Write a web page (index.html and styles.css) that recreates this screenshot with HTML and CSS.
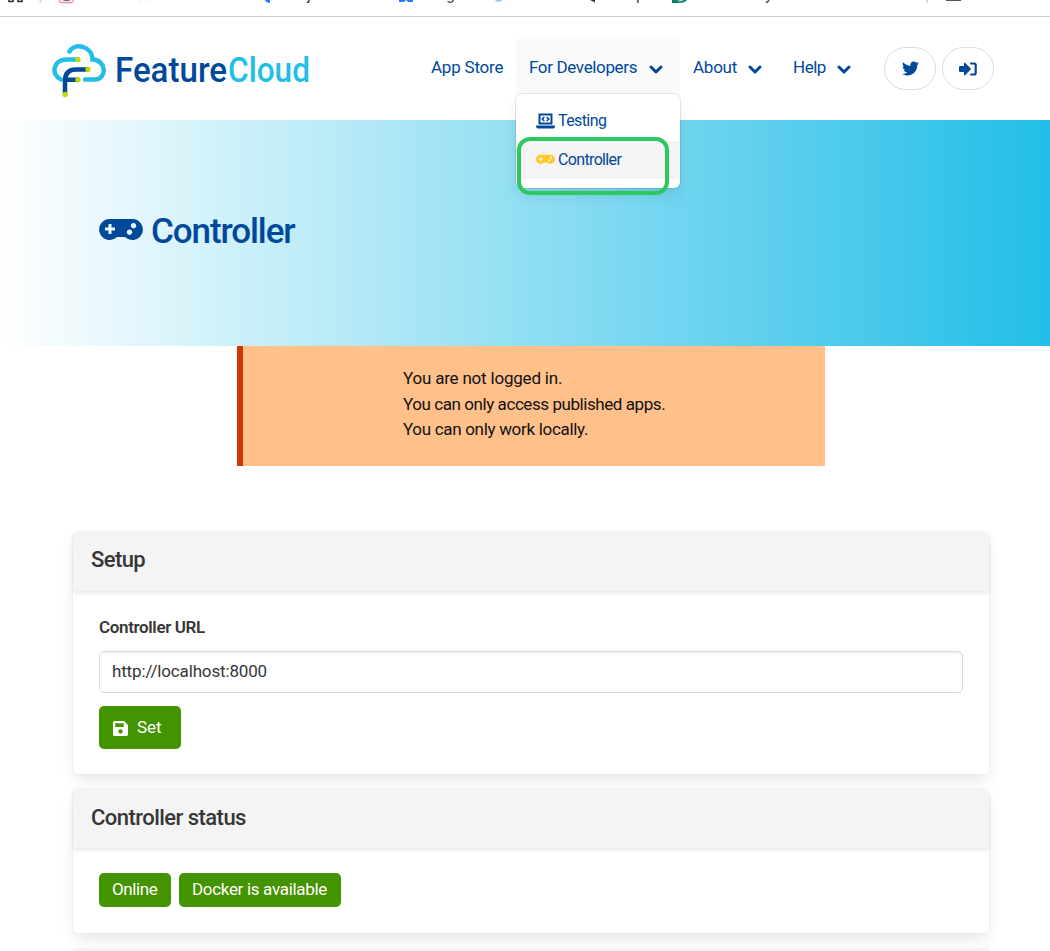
FILE: index.html
```html
<!DOCTYPE html>
<html lang="en">
<head>
<meta charset="utf-8">
<title>FeatureCloud - Controller</title>
<link rel="stylesheet" href="styles.css">
</head>
<body>
<svg class="bookmarks" width="1050" height="16" viewBox="0 0 1050 16">
  <path d="M9 -3v4.500h4v-4.500M18 -3v4.500h4v-4.500" fill="none" stroke="#333" stroke-width="1.600"/>
  <path d="M40.500 0v3M927 0v3" stroke="#e6d2fb" stroke-width="2"/>
  <path d="M59.500 -2v3q0 1.500 1.500 1.500h10.500q1.500 0 1.500-1.500v-3" fill="none" stroke="#f58b98" stroke-width="1.300"/>
  <path d="M62 0h9q-4 1.800-9 0" fill="#566477"/>
  <path d="M138 0h3M148 0h3" stroke="#eadcfb"/>
  <path d="M265 0h5v3q-4-.3-5-3" fill="#1f80ff"/>
  <path d="M399 2v-3h14v3h-5l-2-2-2 2z" fill="#2878ff"/>
  <circle cx="498.500" cy="-2" r="4" fill="#a2c4ff"/>
  <path d="M590 0h5v2.500z" fill="#173755"/>
  <path d="M672 0h15q-2 3-8 3h-7z" fill="#07806e"/>
  <path d="M677 0h6l-4 1.500" fill="none" stroke="#bfe6dd"/>
  <path d="M946 0h15" stroke="#555" stroke-width="2"/>
  <g class="tails"><text x="307" y="-.5">j</text><text x="446" y="-.5">g</text><text x="636" y="-.5">p</text><text x="765" y="-.5">y</text></g>
</svg>
<header class="navbar">
  <a class="brand">
    <svg width="56" height="56" viewBox="0 0 56 56" fill="none" stroke-width="4.500" stroke-linecap="round">
      <path d="M17.500 8.500C23-1 40 3 40.500 16.500C55 17 55 36.500 43 36.500H33M25 16.500H15C0 16.500-1 32 9 36.500" stroke="#22bee7"/>
      <path d="M13 50V38Q13 26.500 24 26.500H35M13.500 36.800H25" stroke="#00489a"/>
      <g fill="#c4d600" stroke="none"><circle cx="26" cy="16.500" r="2.700"/><circle cx="36" cy="26.500" r="2.700"/><circle cx="26" cy="36.800" r="2.700"/><circle cx="13.200" cy="51.500" r="2.700"/></g>
    </svg>
    <svg class="wordmark" width="200" height="44" viewBox="0 0 200 44"><text x="0" y="34" textLength="112" lengthAdjust="spacingAndGlyphs" fill="#00489a">Feature</text><text x="113" y="34" textLength="82" lengthAdjust="spacingAndGlyphs" fill="#22bee7">Cloud</text></svg>
  </a>
  <nav class="menu">
    <a class="item store"><span class="t1">App Store</span></a>
    <div class="item developers">
      <span class="t2">For Developers</span>
      <svg class="chev" width="14" height="9" viewBox="0 0 14 9"><path d="M2 2l5 5 5-5"/></svg>
      <div class="dropdown">
        <a class="entry"><svg width="19" height="16" viewBox="0 0 19 16"><path d="M2.500.5h14v11h-14zM0 12.500h19q0 3-2 3H2q-2 0-2-3z" fill="#00489a"/><path d="M4.500 2.500h10v7h-10z" fill="#fff"/><path d="M8.300 4L6.300 6l2 2M10.700 4l2 2-2 2" fill="none" stroke="#00489a" stroke-width="1.600"/></svg><span class="t5">Testing</span></a>
        <a class="entry active"><svg width="19" height="11" viewBox="0 0 44 24"><use href="#pad" fill="#ffc71f"/></svg><span class="t6">Controller</span></a>
        <div class="highlight"></div>
      </div>
    </div>
    <a class="item about"><span class="t3">About</span><svg class="chev" width="14" height="9" viewBox="0 0 14 9"><path d="M2 2l5 5 5-5"/></svg></a>
    <a class="item help"><span class="t4">Help</span><svg class="chev" width="14" height="9" viewBox="0 0 14 9"><path d="M2 2l5 5 5-5"/></svg></a>
  </nav>
  <div class="pills">
    <a class="pill"><svg width="17" height="17" viewBox="0 0 512 512"><path fill="#00489a" d="M459.370 151.716c.325 4.548.325 9.097.325 13.645 0 138.720-105.583 298.558-298.558 298.558-59.452 0-114.680-17.219-161.137-47.106 8.447.974 16.568 1.299 25.340 1.299 49.055 0 94.213-16.568 130.274-44.832-46.132-.975-84.792-31.188-98.112-72.772 6.498.974 12.995 1.624 19.818 1.624 9.421 0 18.843-1.300 27.614-3.573-48.081-9.747-84.143-51.980-84.143-102.985v-1.299c13.969 7.797 30.214 12.670 47.431 13.319-28.264-18.843-46.781-51.005-46.781-87.391 0-19.492 5.197-37.360 14.294-52.954 51.655 63.675 129.300 105.258 216.365 109.807-1.624-7.797-2.599-15.918-2.599-24.040 0-57.828 46.782-104.934 104.934-104.934 30.213 0 57.502 12.670 76.670 33.137 23.715-4.548 46.456-13.320 66.599-25.340-7.798 24.366-24.366 44.833-46.132 57.827 21.117-2.273 41.584-8.122 60.426-16.243-14.292 20.791-32.161 39.308-52.628 54.253z"/></svg></a>
    <a class="pill"><svg width="18" height="14" viewBox="0 0 18 14"><path fill="#00489a" d="M0 5q0-1 1-1h4V1.500Q5 0 6.300 1L11.500 6.300q.7.700 0 1.400L6.300 13Q5 14 5 12.500V10H1q-1 0-1-1z"/><path d="M12 1.500h3q1.700 0 1.700 1.700v7.600q0 1.700-1.700 1.700h-3" fill="none" stroke="#00489a" stroke-width="2.200" stroke-linecap="round"/></svg></a>
  </div>
</header>
<section class="hero">
  <svg width="44" height="24" viewBox="0 0 44 24">
    <defs><path id="pad" fill-rule="evenodd" d="M11 1H33A10.500 10.500 0 1 1 26 19H18A10.500 10.500 0 1 1 11 1ZM9.500 6V9.500H6v3h3.500v3.500h3V12.500H16v-3h-3.500V6ZM34.500 5a2.700 2.700 0 1 0 .01 0ZM30.500 11.500a2.700 2.700 0 1 0 .01 0Z"/></defs>
    <use href="#pad" fill="#00489a"/>
  </svg>
  <h1><span class="t7">Controller</span></h1>
</section>
<div class="notice">
  <p><span class="n1">You are not logged in.</span><br><span class="n2">You can only access published apps.</span><br><span class="n3">You can only work locally.</span></p>
</div>
<main class="cards">
  <section class="card setup">
    <h2><span class="c1">Setup</span></h2>
    <div class="body">
      <label><span class="c2">Controller URL</span></label>
      <div class="field"><span class="c3">http://localhost:8000</span></div>
      <button class="save"><svg width="15" height="15" viewBox="0 0 15 15"><path fill="#fff" fill-rule="evenodd" d="M1.500 0H11l4 4v9.500q0 1.500-1.500 1.500h-12Q0 15 0 13.500v-12Q0 0 1.500 0ZM2.200 2.200v3.800h8.500V2.200ZM7.500 8.300a2.200 2.200 0 1 0 .01 0Z"/></svg><span class="c4">Set</span></button>
    </div>
  </section>
  <section class="card status">
    <h2><span class="c5">Controller status</span></h2>
    <div class="body tags"><span class="tag online"><span class="c6">Online</span></span><span class="tag docker"><span class="c7">Docker is available</span></span></div>
  </section>
  <section class="card next"></section>
</main>
</body>
</html>
```
FILE: styles.css
```css
* { box-sizing: border-box; }
body { margin: 0; width: 1050px; height: 951px; overflow: hidden; background: #fff; color: #363636; font: 17px/26px Roboto, sans-serif; }
svg { flex: none; display: block; }
span { white-space: nowrap; }
.bookmarks { display: block; }
.tails { font-size: 16px; fill: #444; }
.navbar { height: 104px; border-top: 1px solid #ccc; display: flex; color: #00489a; }
.brand { display: flex; flex: none; width: 417px; padding: 26px 0 0 52px; }
.wordmark { margin: 5px 0 0 7px; font: 500 35px Roboto, sans-serif; }
.menu { display: flex; flex: none; padding-top: 22px; }
.item { height: 55px; padding: 15px 12px 0 13px; display: flex; }
.store { width: 99px; padding-left: 14px; }
.developers { width: 164px; background: #fafafa; position: relative; }
.about { width: 100px; }
.help { width: 90px; }
.chev { margin: 11px 0 0 auto; fill: none; stroke: #00489a; stroke-width: 3; stroke-linecap: round; stroke-linejoin: round; }
.about .chev { margin-right: 6px; }
.help .chev { margin-right: 7px; }
.developers .chev { margin-right: 5px; }
.dropdown { position: absolute; left: 0; top: 55px; width: 164px; height: 94px; padding-top: 8px; background: #fff; border-radius: 6px; box-shadow: 0 8px 16px -2px rgba(10,10,10,.1), 0 0 0 1px rgba(10,10,10,.09); z-index: 1; font-size: 16px; }
.highlight { position: absolute; left: 1px; top: 43px; width: 152px; height: 58px; border: 4px solid #2dc860; border-radius: 13px; }
.entry { height: 38.500px; padding-left: 20px; display: flex; align-items: center; gap: 3px; }
.active { background: #f4f4f4; }
.pills { display: flex; gap: 6px; padding: 30px 0 0 14px; }
.pill { width: 52px; height: 43px; border: 1px solid #dbdbdb; border-radius: 22px; display: flex; align-items: center; justify-content: center; }
.hero { height: 226px; padding: 98px 0 0 99px; display: flex; gap: 8px; background: linear-gradient(90deg, #fff, #22bee7); color: #00489a; }
h1 { margin: -6px 0 0; font: 500 35px/40px Roboto, sans-serif; }
.notice { width: 588px; height: 119.500px; margin: 0 0 66.500px 237px; padding: 20px 0 0 160px; background: #ffc08a; border-left: 6px solid #cf3600; color: #111; }
.notice p { margin: 0; line-height: 25.700px; }
.cards { width: 916px; margin-left: 73px; display: grid; gap: 15px; }
.card { border-radius: 5px; background: #fff; box-shadow: 0 8px 16px -2px rgba(10,10,10,.1), 0 0 0 1px rgba(10,10,10,.02); }
.setup { height: 242px; }
.status { height: 144px; }
.next { height: 4px; background: #f4f4f4; }
h2 { height: 59px; margin: 0; padding: 14px 18px; border-radius: 5px 5px 0 0; background: #f4f4f4; box-shadow: 0 2px 4px rgba(10,10,10,.1); font: 500 22px/27px Roboto, sans-serif; }
.status h2 { padding-top: 15px; }
.body { padding: 25px 26px; }
.setup .body { padding-top: 23px; }
label { display: block; font-weight: 600; height: 36.500px; }
.field { height: 42.500px; padding: 6px 12px; border: 1px solid #dbdbdb; border-radius: 5px; box-shadow: inset 0 1px 2px rgba(10,10,10,.08); }
.save { display: flex; align-items: center; gap: 9px; width: 82px; height: 43px; margin-top: 13px; padding: 0 0 2px 14px; border: 0; border-radius: 5px; background: #449300; color: #fff; font: 17px Roboto, sans-serif; }
.save svg { margin-top: 3px; }
.tags { display: flex; gap: 8px; }
.tag { height: 34px; padding: 3px 13px; border-radius: 5px; background: #449300; color: #fff; }
.online { width: 72px; }
.docker { width: 162px; }
/* Letter fitting */
.t1 { letter-spacing: -.22px; }
.t2 { letter-spacing: -.35px; }
.t3 { letter-spacing: -.25px; }
.t4 { letter-spacing: -.5px; }
.t5 { letter-spacing: -.6px; }
.t6 { letter-spacing: -.65px; }
.t7 { letter-spacing: -1.100px; }
.n1 { letter-spacing: -.2px; }
.n2 { letter-spacing: -.43px; }
.n3 { letter-spacing: -.31px; }
.c1 { letter-spacing: -.6px; }
.c2 { letter-spacing: -.36px; }
.c3 { letter-spacing: -.15px; }
.c5 { letter-spacing: -.54px; }
.c6 { letter-spacing: -.4px; }
.c7 { letter-spacing: -.32px; }
```
